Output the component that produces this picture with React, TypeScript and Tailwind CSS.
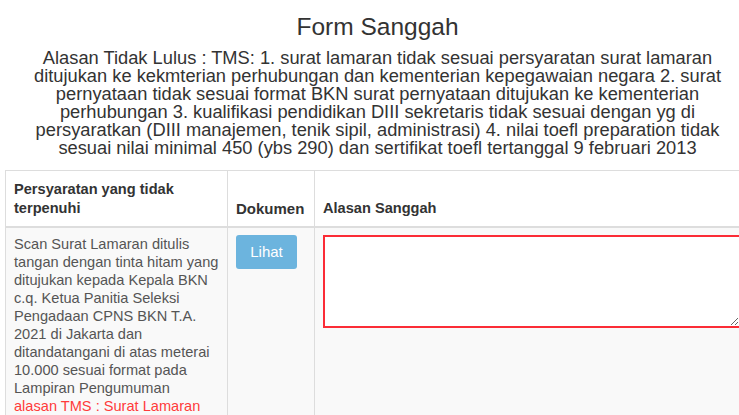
import * as React from 'react'

const alasanLines = [
  'Alasan Tidak Lulus : TMS: 1. surat lamaran tidak sesuai persyaratan surat lamaran',
  'ditujukan ke kekmterian perhubungan dan kementerian kepegawaian negara 2. surat',
  'pernyataan tidak sesuai format BKN surat pernyataan ditujukan ke kementerian',
  'perhubungan 3. kualifikasi pendidikan DIII sekretaris tidak sesuai dengan yg di',
  'persyaratkan (DIII manajemen, tenik sipil, administrasi) 4. nilai toefl preparation tidak',
  'sesuai nilai minimal 450 (ybs 290) dan sertifikat toefl tertanggal 9 februari 2013',
]

const syaratLines = [
  'Scan Surat Lamaran ditulis',
  'tangan dengan tinta hitam yang',
  'ditujukan kepada Kepala BKN',
  'c.q. Ketua Panitia Seleksi',
  'Pengadaan CPNS BKN T.A.',
  '2021 di Jakarta dan',
  'ditandatangani di atas meterai',
  '10.000 sesuai format pada',
  'Lampiran Pengumuman',
]

export default function App() {
  return (
    <div className="w-[739px] h-[415px] overflow-hidden bg-white text-[#333] font-['Liberation_Sans',Arial,sans-serif]">
      <div className="pl-[16px]">
        <h3 className="mt-[13px] text-center text-[24.5px] leading-[28px] font-normal">
          Form Sanggah
        </h3>
        <h4 className="mt-[8px] text-center text-[18.3px] leading-[18px] font-normal whitespace-nowrap">
          {alasanLines.map((line) => (
            <div key={line}>{line}</div>
          ))}
        </h4>
      </div>

      <table className="mt-[13px] ml-[5px] w-[760px] table-fixed border-collapse text-[14.6px]">
        <colgroup>
          <col className="w-[222px]" />
          <col className="w-[87px]" />
          <col />
        </colgroup>
        <thead>
          <tr>
            <th className="border border-[#ddd] border-b-2 px-[8px] pt-[9px] pb-[8px] text-left align-bottom font-bold leading-[19px]">
              Persyaratan yang tidak
              <br />
              terpenuhi
            </th>
            <th className="border border-[#ddd] border-b-2 px-[8px] pt-[9px] pb-[8px] text-left align-bottom font-bold leading-[19px] text-[15px]">
              Dokumen
            </th>
            <th className="border border-[#ddd] border-b-2 px-[8px] pt-[9px] pb-[8px] text-left align-bottom font-bold leading-[19px]">
              Alasan Sanggah
            </th>
          </tr>
        </thead>
        <tbody>
          <tr className="bg-[#f9f9f9]">
            <td className="border border-[#ddd] px-[8px] pt-[7px] pb-[8px] align-top leading-[18px] text-[#555] whitespace-nowrap">
              {syaratLines.map((line) => (
                <div key={line}>{line}</div>
              ))}
              <div className="text-[#ff3b3b]">alasan TMS : Surat Lamaran</div>
              <div className="text-[#ff3b3b]">tidak sesuai</div>
            </td>
            <td className="border border-[#ddd] px-[8px] pt-[7px] pb-[8px] align-top">
              <button
                type="button"
                className="w-[61px] h-[34px] rounded-[3px] bg-[#6cb4de] text-white text-[15px] leading-[34px]"
              >
                Lihat
              </button>
            </td>
            <td className="border border-[#ddd] px-[8px] pt-[7px] pb-[8px] align-top">
              <div className="w-[418px] h-[93px] border-2 border-red-500 bg-white">
                <textarea className="block w-full h-full border-0 bg-white outline-none" />
              </div>
            </td>
          </tr>
        </tbody>
      </table>
    </div>
  )
}
